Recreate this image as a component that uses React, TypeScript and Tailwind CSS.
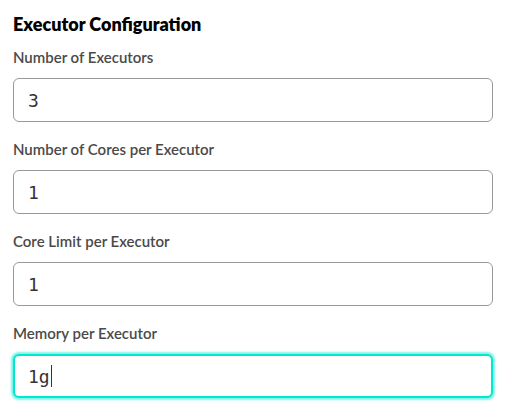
import React from "react";

const fields = [
  { label: "Number of Executors", value: "3" },
  { label: "Number of Cores per Executor", value: "1" },
  { label: "Core Limit per Executor", value: "1" },
  { label: "Memory per Executor", value: "1g", focused: true },
];

export default function App() {
  return (
    <div className="w-[513px] h-[418px] bg-white px-[13px] pt-[12px]" style={{ fontFamily: "Lato, 'Noto Sans', sans-serif" }}>
      <h2 className="text-[18px] leading-[24px] font-extrabold text-black">Executor Configuration</h2>
      {fields.map((f, i) => (
        <div key={i} className={i === 0 ? "mt-[11px]" : "mt-[17px]"}>
          <div className="text-[15px] leading-[20px] font-semibold text-[#4a4a4a] mb-[11px]">{f.label}</div>
          <div
            className={
              "h-[44px] w-[480px] rounded-[6px] bg-white flex items-center " +
              (f.focused
                ? "border-2 border-[#00E8CF] shadow-[0_0_2px_2px_rgba(0,232,207,0.5)] pl-[13px]"
                : "border border-[#999999] pl-[14px]")
            }
          >
            <span className="text-[18px] text-[#333333]" style={{ fontFamily: "'DejaVu Sans Mono', monospace" }}>
              {f.value}
            </span>
            {f.focused && <span className="w-px h-[22px] bg-[#333333] ml-px" />}
          </div>
        </div>
      ))}
    </div>
  );
}
